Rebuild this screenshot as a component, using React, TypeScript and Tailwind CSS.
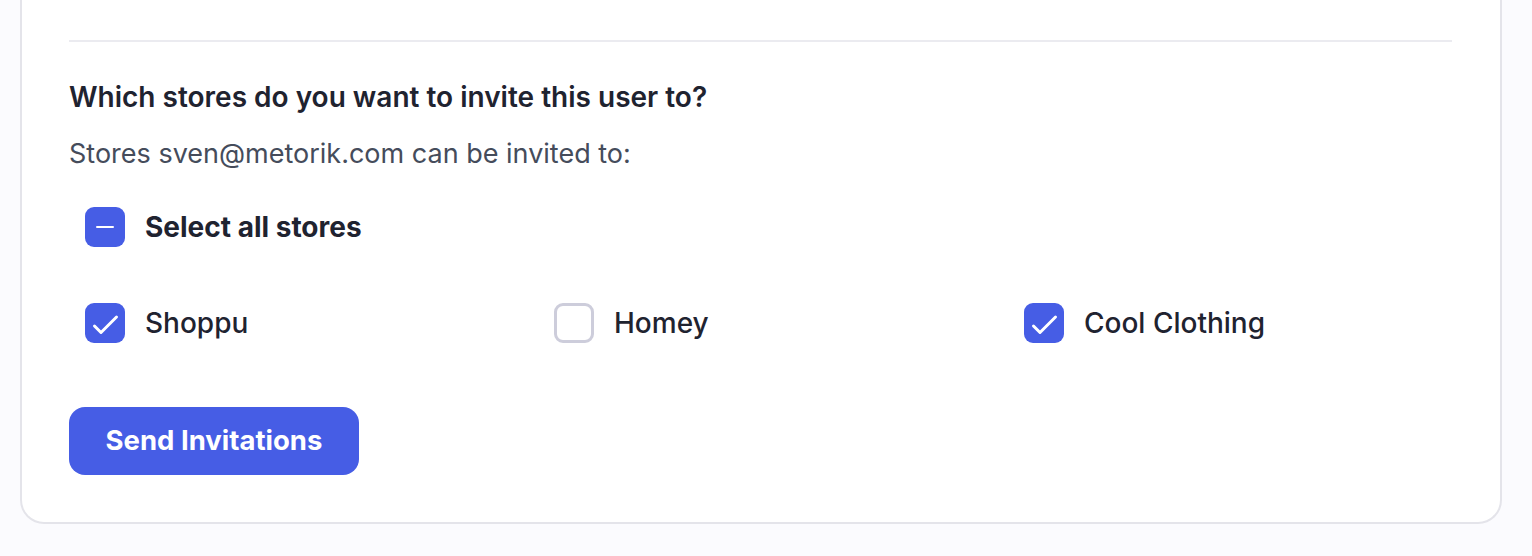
import { useState } from "react";

type Store = {
  name: string;
  checked: boolean;
};

function Checkbox({ state }: { state: "checked" | "mixed" | "empty" }) {
  if (state === "empty") {
    return (
      <span className="w-10 h-10 shrink-0 rounded-[9px] border-[3px] border-[#cdcddb] bg-white" />
    );
  }
  return (
    <span className="w-10 h-10 shrink-0 rounded-[9px] bg-[#465de5] flex items-center justify-center">
      {state === "checked" ? (
        <svg width="28" height="28" viewBox="0 0 28 28" fill="none">
          <path
            d="M3.5 17l6.5 6.5L25.5 8"
            stroke="white"
            strokeWidth="3"
            strokeLinecap="round"
            strokeLinejoin="round"
          />
        </svg>
      ) : (
        <span className="w-[18px] h-[2.5px] rounded-full bg-white" />
      )}
    </span>
  );
}

export default function App() {
  const [stores] = useState<Store[]>([
    { name: "Shoppu", checked: true },
    { name: "Homey", checked: false },
    { name: "Cool Clothing", checked: true },
  ]);

  return (
    <div className="min-h-[556px] bg-[#fbfbfe] font-['Inter',sans-serif]">
      <div className="ml-[20px] w-[1482px] bg-white border-2 border-t-0 border-[#e4e4ea] rounded-b-[24px] pt-[40px] pl-[47px] pr-[48px] pb-[47px]">
        <div className="h-[2px] bg-[#ebebf0]" />

        <h3 className="mt-[37px] text-[28px] leading-[36px] font-semibold text-[#1f2330]">
          Which stores do you want to invite this user to?
        </h3>
        <p className="mt-[21px] text-[27px] leading-[36px] text-[#454c5b]">
          Stores sven@metorik.com can be invited to:
        </p>

        <div className="mt-[35px] pl-[16px] flex items-center gap-5">
          <Checkbox state="mixed" />
          <span className="text-[28px] leading-[36px] font-bold text-[#1f2330]">
            Select all stores
          </span>
        </div>

        <div className="mt-[56px] pl-[16px] grid grid-cols-[469px_470px_1fr]">
          {stores.map((store) => (
            <div key={store.name} className="flex items-center gap-5">
              <Checkbox state={store.checked ? "checked" : "empty"} />
              <span className="text-[28px] leading-[36px] font-medium text-[#1f2330]">
                {store.name}
              </span>
            </div>
          ))}
        </div>

        <button className="mt-[64px] h-[68px] w-[290px] rounded-[16px] bg-[#465de5] text-white text-[27.5px] font-bold">
          Send Invitations
        </button>
      </div>
    </div>
  );
}
